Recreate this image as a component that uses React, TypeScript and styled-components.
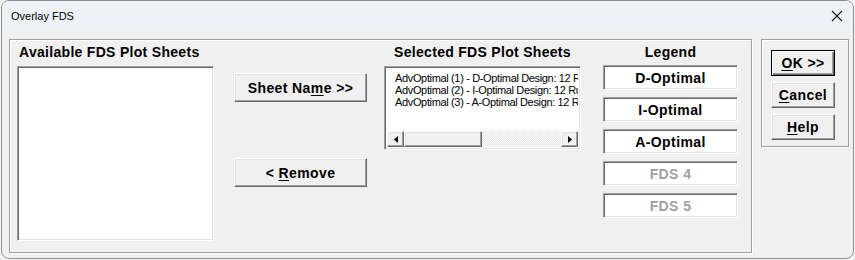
import React from 'react';
import styled, { createGlobalStyle } from 'styled-components';

const GlobalStyle = createGlobalStyle`
  html, body {
    margin: 0;
    padding: 0;
    background: #f4f4f4;
  }
  body {
    font-family: "Liberation Sans", Arial, sans-serif;
  }
`;

const sheets = [
  'AdvOptimal (1) - D-Optimal Design: 12 Runs',
  'AdvOptimal (2) - I-Optimal Design: 12 Runs',
  'AdvOptimal (3) - A-Optimal Design: 12 Runs',
];

const legend = [
  { label: 'D-Optimal', enabled: true },
  { label: 'I-Optimal', enabled: true },
  { label: 'A-Optimal', enabled: true },
  { label: 'FDS 4', enabled: false },
  { label: 'FDS 5', enabled: false },
];

const App: React.FC = () => {
  return (
    <>
      <GlobalStyle />
      <Window>
        <TitleBar>
          <Title>Overlay FDS</Title>
          <CloseIcon width="12" height="12" viewBox="0 0 12 12">
            <path d="M1 1 L11 11 M11 1 L1 11" stroke="#1a1a1a" strokeWidth="1.1" />
          </CloseIcon>
        </TitleBar>

        <Content>
          <MainFrame>
            <ListColumn>
              <ColumnTitle $align="left">Available FDS Plot Sheets</ColumnTitle>
              <ListBox $height={175} />
            </ListColumn>

            <ButtonColumn>
              <WideButton>
                Sheet Na<u>m</u>e &gt;&gt;
              </WideButton>
              <WideButton>
                &lt; <u>R</u>emove
              </WideButton>
            </ButtonColumn>

            <SelectedColumn>
              <ColumnTitle $align="center">Selected FDS Plot Sheets</ColumnTitle>
              <ListBox $height={84}>
                <Items>
                  {sheets.map((s) => (
                    <Item key={s}>{s}</Item>
                  ))}
                </Items>
                <HScroll>
                  <ArrowButton>
                    <svg width="4" height="7" viewBox="0 0 4 7">
                      <path d="M4 0 L0 3.5 L4 7 Z" fill="#000" />
                    </svg>
                  </ArrowButton>
                  <Thumb />
                  <Track />
                  <ArrowButton>
                    <svg width="4" height="7" viewBox="0 0 4 7">
                      <path d="M0 0 L4 3.5 L0 7 Z" fill="#000" />
                    </svg>
                  </ArrowButton>
                </HScroll>
              </ListBox>
            </SelectedColumn>

            <LegendColumn>
              <ColumnTitle $align="center">Legend</ColumnTitle>
              <LegendList>
                {legend.map((l) => (
                  <LegendBox key={l.label} $enabled={l.enabled}>
                    {l.label}
                  </LegendBox>
                ))}
              </LegendList>
            </LegendColumn>
          </MainFrame>

          <SideFrame>
            <SideButton $default>
              <u>O</u>K &gt;&gt;
            </SideButton>
            <SideButton>
              <u>C</u>ancel
            </SideButton>
            <SideButton>
              <u>H</u>elp
            </SideButton>
          </SideFrame>
        </Content>
      </Window>
    </>
  );
};

export default App;

const Window = styled.div`
  box-sizing: border-box;
  width: 853px;
  height: 259px;
  margin-left: 1px;
  border: 1px solid #8e8e8e;
  border-radius: 8px;
  background: #f0f0f0;
  overflow: hidden;
  display: flex;
  flex-direction: column;
`;

const TitleBar = styled.div`
  height: 29px;
  flex: none;
  display: flex;
  align-items: center;
  justify-content: space-between;
  padding: 0 10px 0 9px;
  background: #eef2f6;
`;

const Title = styled.span`
  font-size: 11px;
  color: #000;
`;

const CloseIcon = styled.svg`
  display: block;
  margin-top: 1px;
`;

const Content = styled.div`
  display: flex;
  align-items: flex-start;
  padding: 9px 0 0 7px;
`;

const etched = `
  box-sizing: border-box;
  border: 1px solid #a0a0a0;
  box-shadow: inset 1px 1px 0 #fff, 1px 1px 0 #fff;
`;

const MainFrame = styled.div`
  ${etched}
  width: 743px;
  height: 214px;
  display: flex;
  align-items: flex-start;
  padding: 3px 0 0 7px;
`;

const SideFrame = styled.div`
  ${etched}
  width: 88px;
  height: 108px;
  margin-left: 9px;
  display: flex;
  flex-direction: column;
  gap: 6px;
  padding: 10px 0 0 9px;
`;

const ListColumn = styled.div`
  width: 197px;
  display: flex;
  flex-direction: column;
`;

const SelectedColumn = styled(ListColumn)`
  margin-left: 17px;
`;

const ButtonColumn = styled.div`
  width: 133px;
  margin-left: 20px;
  padding-top: 30px;
  display: flex;
  flex-direction: column;
  gap: 56px;
`;

const LegendColumn = styled.div`
  width: 135px;
  margin-left: 22px;
  display: flex;
  flex-direction: column;
`;

const ColumnTitle = styled.div<{ $align: 'left' | 'center' }>`
  height: 16px;
  margin-top: 1px;
  padding-left: ${(p) => (p.$align === 'left' ? '2px' : '0')};
  text-align: ${(p) => p.$align};
  font-size: 14px;
  line-height: 16px;
  font-weight: bold;
  letter-spacing: 0.3px;
  color: #000;
  white-space: nowrap;
`;

const sunken = `
  box-sizing: border-box;
  border: 1px solid;
  border-color: #a0a0a0 #fff #fff #a0a0a0;
  box-shadow: inset 1px 1px 0 #696969, inset -1px -1px 0 #e3e3e3;
  background: #fff;
`;

const ListBox = styled.div<{ $height: number }>`
  ${sunken}
  height: ${(p) => p.$height}px;
  margin-top: 6px;
  padding: 2px;
  display: flex;
  flex-direction: column;
  overflow: hidden;
`;

const Items = styled.div`
  flex: 1;
  overflow: hidden;
  padding: 3px 0 0 8px;
`;

const Item = styled.div`
  font-size: 11px;
  line-height: 12px;
  letter-spacing: -0.35px;
  color: #000;
  white-space: nowrap;
`;

const HScroll = styled.div`
  height: 16px;
  display: flex;
`;

const raised = `
  box-sizing: border-box;
  border: 1px solid;
  border-color: #fff #696969 #696969 #fff;
  box-shadow: inset -1px -1px 0 #a0a0a0, inset 1px 1px 0 #e3e3e3;
  background: #f0f0f0;
`;

const ArrowButton = styled.div`
  ${raised}
  width: 17px;
  height: 16px;
  display: flex;
  align-items: center;
  justify-content: center;
`;

const Thumb = styled.div`
  ${raised}
  width: 78px;
  height: 16px;
`;

const Track = styled.div`
  flex: 1;
  background: repeating-conic-gradient(#ffffff 0 25%, #e6e6e6 0 50%) 0 0 / 2px 2px;
`;

const buttonText = `
  font-family: "Liberation Sans", Arial, sans-serif;
  font-size: 14px;
  font-weight: bold;
  letter-spacing: 0.4px;
  color: #000;
  padding: 0;
  u {
    text-underline-offset: 2px;
  }
`;

const WideButton = styled.button`
  ${raised}
  ${buttonText}
  width: 133px;
  height: 29px;
`;

const SideButton = styled.button<{ $default?: boolean }>`
  ${raised}
  ${buttonText}
  width: 64px;
  height: 26px;
  ${(p) =>
    p.$default &&
    `
    border: 1px solid #000;
    box-shadow: inset 1px 1px 0 #fff, inset -1px -1px 0 #696969, inset -2px -2px 0 #a0a0a0;
  `}
`;

const LegendList = styled.div`
  margin-top: 5px;
  display: flex;
  flex-direction: column;
  gap: 7px;
`;

const LegendBox = styled.div<{ $enabled: boolean }>`
  ${sunken}
  height: 25px;
  display: flex;
  align-items: center;
  justify-content: center;
  font-size: 14px;
  font-weight: bold;
  letter-spacing: 0.4px;
  color: ${(p) => (p.$enabled ? '#000' : '#a0a0a0')};
`;
